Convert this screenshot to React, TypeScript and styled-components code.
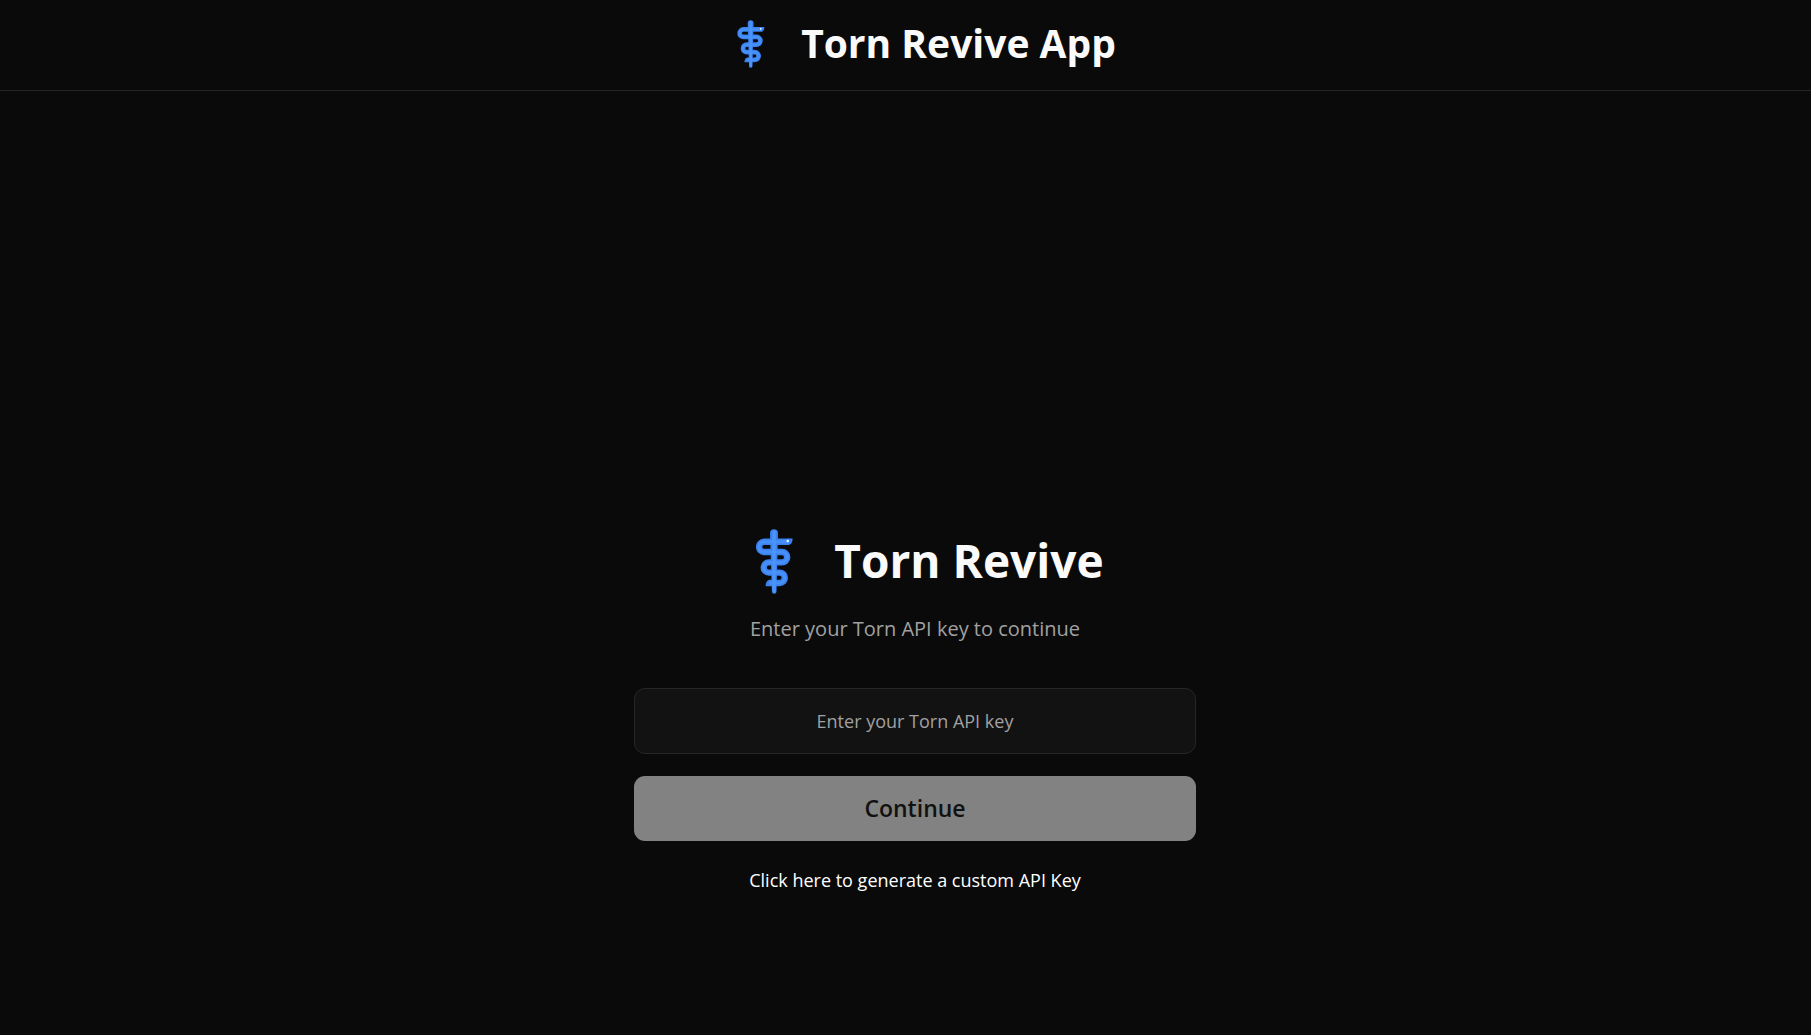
import React, { useState } from "react";
import styled, { createGlobalStyle } from "styled-components";

const GlobalStyle = createGlobalStyle`
  *, *::before, *::after { box-sizing: border-box; }
  body {
    margin: 0;
    background: #0a0a0a;
    color: #fafafa;
    font-family: "Open Sans", "Noto Sans", sans-serif;
  }
`;

const Page = styled.div`
  min-height: 100vh;
  display: flex;
  flex-direction: column;
`;

const Header = styled.header`
  display: flex;
  align-items: center;
  justify-content: center;
  gap: 36px;
  height: 91px;
  padding: 0 0 2px 42px;
  border-bottom: 1px solid #262626;
`;

const HeaderTitle = styled.h1`
  margin: 0;
  padding-bottom: 2px;
  font-size: 39px;
  line-height: 56px;
  font-weight: 700;
`;

const Main = styled.main`
  flex: 1;
  display: flex;
  flex-direction: column;
  align-items: center;
  justify-content: flex-end;
  padding: 48px 0 141px 19px;
`;

const Card = styled.section`
  width: 562px;
  max-width: 100%;
  display: flex;
  flex-direction: column;
  align-items: center;
  text-align: center;
`;

const Brand = styled.div`
  display: flex;
  align-items: center;
  gap: 41px;
  padding-left: 30px;
`;

const Title = styled.h2`
  margin: 0;
  padding-bottom: 2px;
  font-size: 46px;
  line-height: 64px;
  font-weight: 700;
`;

const Subtitle = styled.p`
  margin: 19px 0 0;
  font-size: 20px;
  line-height: 32px;
  color: #a1a1a1;
`;

const Form = styled.form`
  width: 100%;
  display: flex;
  flex-direction: column;
  gap: 22px;
  margin-top: 43px;
`;

const KeyInput = styled.input`
  width: 100%;
  height: 66px;
  padding: 0 16px;
  border: 1px solid #262626;
  border-radius: 11px;
  background: #121212;
  color: #fafafa;
  font-family: inherit;
  font-size: 18px;
  text-align: center;
  outline: none;

  &::placeholder {
    color: #a1a1a1;
    opacity: 1;
  }
`;

const ContinueButton = styled.button`
  height: 65px;
  padding: 0 16px 2px;
  border: 0;
  border-radius: 11px;
  background: #fafafa;
  color: #171717;
  font-family: inherit;
  font-size: 23px;
  font-weight: 600;
  cursor: pointer;

  &:disabled {
    background: #828282;
    color: #111111;
    cursor: default;
  }
`;

const KeyLink = styled.a`
  margin-top: 25px;
  font-size: 18px;
  line-height: 28px;
  color: #ffffff;
  text-decoration: none;
`;

const SNAKE =
  "M33 12.8H8.2a5.1 5.1 0 0 0 0 10.2H26a5.2 5.2 0 0 1 0 10.4H12.8a5.1 5.1 0 0 0 0 10.2H23.6a5.2 5.2 0 0 1 0 10.4H13";

function RodIcon({ width, height }: { width: number; height: number }) {
  return (
    <svg width={width} height={height} viewBox="0 0 37 65" fill="none" aria-hidden="true">
      <path d="M14 4.2a4 4 0 0 1 8 0L20.5 62.5a2.3 2.3 0 0 1-4.6 0Z" fill="#3b82ee" />
      <path d={SNAKE} stroke="#3b82ee" strokeWidth="6.4" />
      <path d="M32 9.6h4.6c0 4-1.6 6.4-4.6 6.4Z" fill="#3b82ee" />
      <path d="M13.5 50.8v6.4H9.6c0-3.6 1.3-6 3.9-6.4Z" fill="#3b82ee" />
      <path d={SNAKE} stroke="#4690f8" strokeWidth="3.2" />
      <path d="M18.1 3v59" stroke="#4a94fb" strokeWidth="3.4" strokeLinecap="round" />
      <circle cx="31.7" cy="12" r="1.2" fill="#ffffff" />
    </svg>
  );
}

export default function App() {
  const [apiKey, setApiKey] = useState("");

  return (
    <Page>
      <GlobalStyle />
      <Header>
        <RodIcon width={28} height={48} />
        <HeaderTitle>Torn Revive App</HeaderTitle>
      </Header>
      <Main>
        <Card>
          <Brand>
            <RodIcon width={37} height={65} />
            <Title>Torn Revive</Title>
          </Brand>
          <Subtitle>Enter your Torn API key to continue</Subtitle>
          <Form onSubmit={(event) => event.preventDefault()}>
            <KeyInput
              type="text"
              aria-label="Torn API key"
              placeholder="Enter your Torn API key"
              value={apiKey}
              onChange={(event) => setApiKey(event.target.value)}
            />
            <ContinueButton type="submit" disabled={apiKey.trim() === ""}>
              Continue
            </ContinueButton>
          </Form>
          <KeyLink href="#generate">Click here to generate a custom API Key</KeyLink>
        </Card>
      </Main>
    </Page>
  );
}
